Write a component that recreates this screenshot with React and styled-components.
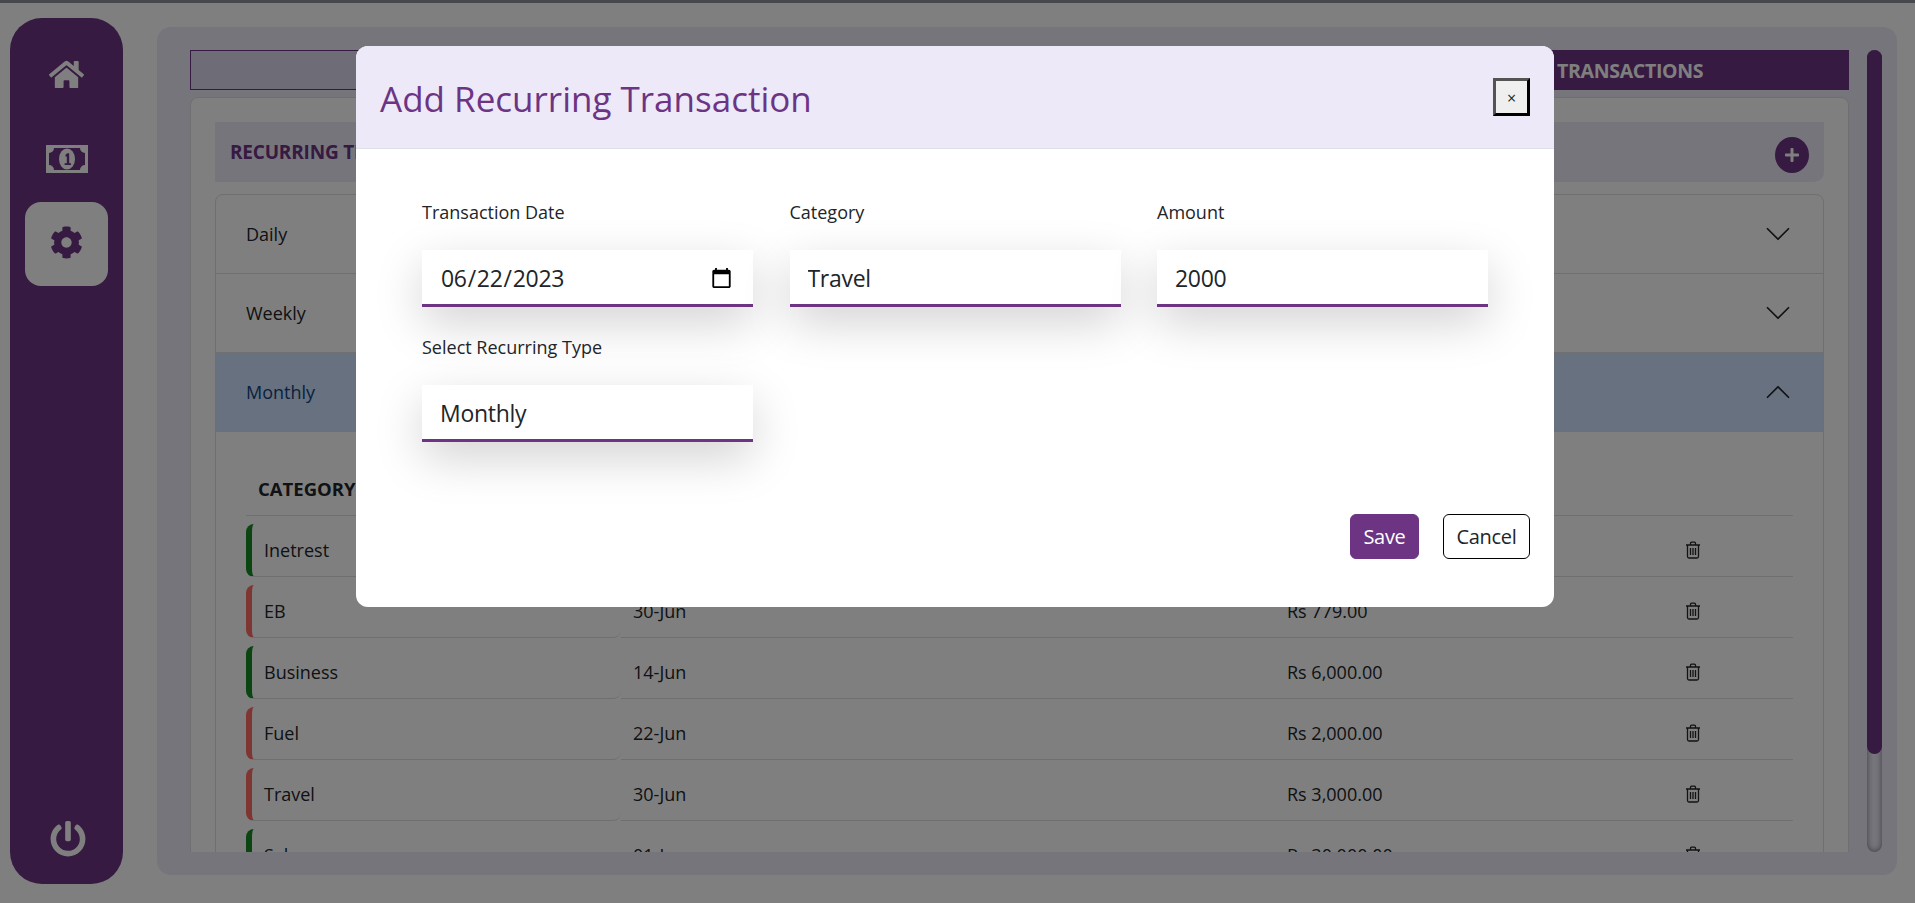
import styled, { createGlobalStyle } from "styled-components";
import { FaHome, FaCog, FaPowerOff, FaPlus } from "react-icons/fa";
import { BsChevronDown, BsChevronUp } from "react-icons/bs";

const purple = "#6c3483";
const uiFont = `"Open Sans", "Noto Sans", "Liberation Sans", sans-serif`;

const GlobalStyle = createGlobalStyle`
    * {
        box-sizing: border-box;
    }
    body {
        margin: 0;
        background: #fff;
        font-family: ${uiFont};
        color: #212529;
        overflow: hidden;
    }
`;

const Page = styled.div`
    display: flex;
    flex-direction: column;
    height: 100vh;
    overflow: hidden;
`;

const TopLine = styled.div`
    height: 3px;
    flex: none;
    background: #8e909c;
`;

const Shell = styled.div`
    flex: 1;
    min-height: 0;
    display: flex;
    padding: 15px 18px 19px 10px;
`;

const Sidebar = styled.nav`
    width: 113px;
    flex: none;
    display: flex;
    flex-direction: column;
    align-items: center;
    padding: 14px 15px 27px;
    background: ${purple};
    border-radius: 32px;
`;

const NavItem = styled.div`
    width: 83px;
    height: 84px;
    flex: none;
    margin-bottom: 1px;
    padding-bottom: ${(p) => (p.$active ? "3px" : "0")};
    display: flex;
    align-items: center;
    justify-content: center;
    border-radius: 16px;
    color: ${(p) => (p.$active ? purple : "#fff")};
    background: ${(p) => (p.$active ? "#fff" : "transparent")};
`;

const PowerItem = styled.div`
    margin-top: auto;
    margin-left: 3px;
    display: flex;
    color: #fff;
`;

const Main = styled.main`
    flex: 1;
    min-width: 0;
    margin: 9px 0 9px 34px;
    padding: 23px 15px 23px 33px;
    display: flex;
    gap: 18px;
    background: #ecebf8;
    border-radius: 14px;
`;

const Content = styled.div`
    flex: 1;
    min-width: 0;
    overflow: hidden;
`;

const ScrollTrack = styled.div`
    width: 15px;
    flex: none;
    border-radius: 8px;
    box-shadow: inset 0 0 6px rgba(0, 0, 0, 0.5);
`;

const ScrollThumb = styled.div`
    height: 704px;
    background: ${purple};
    border-radius: 8px;
`;

const Tabs = styled.div`
    display: grid;
    grid-template-columns: repeat(3, 1fr);
    height: 40px;
`;

const Tab = styled.div`
    display: flex;
    align-items: center;
    justify-content: center;
    font-size: 19.5px;
    font-weight: 700;
    letter-spacing: -0.3px;
    color: #fff;
    background: ${(p) => (p.$active ? purple : "#dcd8ee")};
    border: 1px solid ${purple};
`;

const Card = styled.section`
    margin-top: 7px;
    padding: 24px 24px 0;
    background: #fff;
    border: 1px solid #dedede;
    border-radius: 8px;
`;

const SectionHeader = styled.div`
    height: 60px;
    display: flex;
    align-items: center;
    justify-content: space-between;
    padding: 0 15px;
    background: #ecebf8;
    border-radius: 0 0 10px 0;
`;

const SectionTitle = styled.h2`
    margin: 0;
    font-size: 19px;
    font-weight: 700;
    letter-spacing: -0.2px;
    color: ${purple};
`;

const AddButton = styled.span`
    width: 34px;
    height: 36px;
    margin-top: 6px;
    display: flex;
    align-items: center;
    justify-content: center;
    border-radius: 50%;
    color: #fff;
    background: ${purple};
`;

const Accordion = styled.div`
    margin-top: 12px;
    border: 1px solid #dedede;
    border-radius: 8px 8px 0 0;
`;

const AccordionRow = styled.div`
    height: 79px;
    display: flex;
    align-items: center;
    justify-content: space-between;
    padding: 0 31px 0 30px;
    font-size: 18px;
    color: ${(p) => (p.$open ? "#14427c" : "#212529")};
    background: ${(p) => (p.$open ? "#cfe2ff" : "transparent")};
    border-bottom: 1px solid #dedede;
`;

const TableWrap = styled.div`
    padding: 33px 30px 0;
`;

const HeadRow = styled.div`
    display: grid;
    grid-template-columns: 375px 654px 398px 120px;
    height: 51px;
    padding-bottom: 4px;
    align-items: center;
    border-bottom: 1px solid #dedede;
    font-size: 18.5px;
    font-weight: 700;
    color: #212529;
`;

const HeadCell = styled.div`
    padding: 0 12px;
`;

const Row = styled.div`
    display: grid;
    grid-template-columns: 375px 654px 398px 120px;
    padding-top: 8px;
`;

const Cell = styled.div`
    height: 53px;
    display: flex;
    align-items: center;
    padding: 0 12px;
    font-size: 18px;
    border-bottom: 1px solid #dedede;
`;

const CategoryCell = styled(Cell)`
    border-left: 6px solid ${(p) => (p.$income ? "#148a24" : "#ff6d66")};
    border-radius: 8px 0 8px 8px;
`;

const Overlay = styled.div`
    position: fixed;
    inset: 0;
    background: rgba(0, 0, 0, 0.5);
`;

const Modal = styled.div`
    width: 1198px;
    margin: 46px 0 0 356px;
    background: #fff;
    border-radius: 12px;
    overflow: hidden;
`;

const ModalHeader = styled.header`
    height: 103px;
    display: flex;
    align-items: center;
    justify-content: space-between;
    padding: 0 24px;
    background: #ede9f9;
    border-bottom: 1px solid #dee2e6;
`;

const ModalTitle = styled.h1`
    margin: 2px 0 0;
    font-size: 35px;
    font-weight: 500;
    color: ${purple};
`;

const CloseButton = styled.button`
    width: 37px;
    height: 38px;
    margin-top: -1px;
    padding: 2px 0 0;
    font-size: 16px;
    font-family: ${uiFont};
    color: #212529;
    background: #efefef;
    border: 3px outset #000;
`;

const FormGrid = styled.div`
    display: grid;
    grid-template-columns: repeat(3, 331px);
    column-gap: 36.5px;
    row-gap: 27px;
    padding: 50px 66px 0;
`;

const Field = styled.label`
    display: block;
`;

const FieldLabel = styled.span`
    display: block;
    height: 27px;
    margin-bottom: 24px;
    font-size: 18px;
    line-height: 26px;
    color: #212529;
`;

const FieldInput = styled.input`
    display: block;
    width: 100%;
    height: 57px;
    padding: 2px 18px 0;
    font-family: ${uiFont};
    font-size: 23px;
    letter-spacing: -0.3px;
    color: #212529;
    background: #fff;
    border: 0;
    border-bottom: 3px solid ${purple};
    outline: none;
    box-shadow: 0 16px 48px rgba(0, 0, 0, 0.175);
`;

const ModalFooter = styled.footer`
    display: flex;
    justify-content: flex-end;
    gap: 24px;
    margin-top: 72px;
    padding: 0 24px 48px;
`;

const FooterButton = styled.button`
    width: ${(p) => (p.$primary ? "69px" : "87px")};
    height: 45px;
    padding: 0;
    font-family: ${uiFont};
    font-size: 20px;
    font-weight: ${(p) => (p.$primary ? 500 : 400)};
    letter-spacing: -0.3px;
    border-radius: 6px;
    color: ${(p) => (p.$primary ? "#fff" : "#212529")};
    background: ${(p) => (p.$primary ? purple : "#fff")};
    border: 1px solid ${(p) => (p.$primary ? purple : "#000")};
`;

const rows = [
    { id: 1, category: "Inetrest", date: "01-Jun", amount: "Rs 1,500.00", income: true },
    { id: 2, category: "EB", date: "30-Jun", amount: "Rs 779.00", income: false },
    { id: 3, category: "Business", date: "14-Jun", amount: "Rs 6,000.00", income: true },
    { id: 4, category: "Fuel", date: "22-Jun", amount: "Rs 2,000.00", income: false },
    { id: 5, category: "Travel", date: "30-Jun", amount: "Rs 3,000.00", income: false },
    { id: 6, category: "Salary", date: "01-Jun", amount: "Rs 30,000.00", income: true },
];

const TrashIcon = () => (
    <svg width="16" height="18" viewBox="0 0 16 18" fill="none" stroke="#262626" strokeWidth="1.3">
        <path d="M1 4h14M5.5 4V2.2q0-1 1-1h3q1 0 1 1V4M2.5 4v11.5q0 1.5 1.5 1.5h8q1.5 0 1.5-1.5V4M5.5 7v7M8 7v7M10.5 7v7" />
    </svg>
);

const BillIcon = () => (
    <svg width="42" height="28" viewBox="0 0 42 28">
        <rect width="42" height="28" fill="#fff" />
        <path d="M8 3h26a5 5 0 0 0 5 5v12a5 5 0 0 0-5 5H8a5 5 0 0 0-5-5V8a5 5 0 0 0 5-5z" fill={purple} />
        <ellipse cx="21" cy="14" rx="8" ry="10.5" fill="#fff" />
        <path d="M19.6 9.6l2-1.4h1.6v10h1.8v1.8h-6.4v-1.8h2.2v-6.9l-1.2.8z" fill={purple} />
    </svg>
);

export default function App() {
    return (
        <Page>
            <GlobalStyle />
            <TopLine />
            <Shell>
                <Sidebar>
                    <NavItem><FaHome size={35} /></NavItem>
                    <NavItem><BillIcon /></NavItem>
                    <NavItem $active><FaCog size={33} /></NavItem>
                    <PowerItem><FaPowerOff size={36} /></PowerItem>
                </Sidebar>
                <Main>
                    <Content>
                        <Tabs>
                            <Tab />
                            <Tab />
                            <Tab $active>RECURRING TRANSACTIONS</Tab>
                        </Tabs>
                        <Card>
                            <SectionHeader>
                                <SectionTitle>RECURRING TRANSACTIONS</SectionTitle>
                                <AddButton><FaPlus size={16} /></AddButton>
                            </SectionHeader>
                            <Accordion>
                                <AccordionRow>Daily<BsChevronDown size={28} /></AccordionRow>
                                <AccordionRow>Weekly<BsChevronDown size={28} /></AccordionRow>
                                <AccordionRow $open>Monthly<BsChevronUp size={28} color="#212529" /></AccordionRow>
                                <TableWrap>
                                    <HeadRow>
                                        <HeadCell>CATEGORY</HeadCell>
                                        <HeadCell>DATE</HeadCell>
                                        <HeadCell>AMOUNT</HeadCell>
                                        <HeadCell />
                                    </HeadRow>
                                    {rows.map((row) => (
                                        <Row key={row.id}>
                                            <CategoryCell $income={row.income}>{row.category}</CategoryCell>
                                            <Cell>{row.date}</Cell>
                                            <Cell>{row.amount}</Cell>
                                            <Cell><TrashIcon /></Cell>
                                        </Row>
                                    ))}
                                </TableWrap>
                            </Accordion>
                        </Card>
                    </Content>
                    <ScrollTrack>
                        <ScrollThumb />
                    </ScrollTrack>
                </Main>
            </Shell>
            <Overlay>
                <Modal>
                    <ModalHeader>
                        <ModalTitle>Add Recurring Transaction</ModalTitle>
                        <CloseButton>×</CloseButton>
                    </ModalHeader>
                    <FormGrid>
                        <Field>
                            <FieldLabel>Transaction Date</FieldLabel>
                            <FieldInput type="date" defaultValue="2023-06-22" />
                        </Field>
                        <Field>
                            <FieldLabel>Category</FieldLabel>
                            <FieldInput readOnly value="Travel" />
                        </Field>
                        <Field>
                            <FieldLabel>Amount</FieldLabel>
                            <FieldInput readOnly value="2000" />
                        </Field>
                        <Field>
                            <FieldLabel>Select Recurring Type</FieldLabel>
                            <FieldInput readOnly value="Monthly" />
                        </Field>
                    </FormGrid>
                    <ModalFooter>
                        <FooterButton $primary>Save</FooterButton>
                        <FooterButton>Cancel</FooterButton>
                    </ModalFooter>
                </Modal>
            </Overlay>
        </Page>
    );
}
